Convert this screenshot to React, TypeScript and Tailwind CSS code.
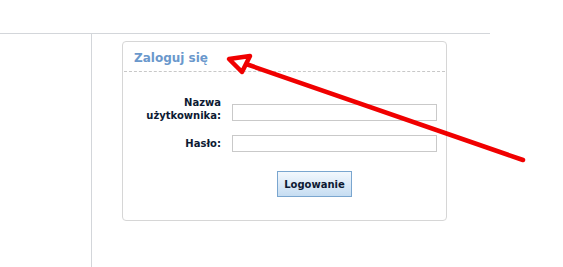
import React from 'react';

export default function App() {
  return (
    <div className="relative w-[563px] h-[267px] bg-white overflow-hidden" style={{ fontFamily: '"DejaVu Sans", Verdana, sans-serif' }}>
      <div className="h-[33px]" />
      <div className="flex w-[490px] h-[234px] border-t border-[#d3d6da]">
        <div className="w-[92px] border-r border-[#d3d6da]" />
        <div className="pl-[30px] pt-[7px]">
          <div className="w-[325px] h-[180px] border border-[#d6d6d6] rounded-[4px] bg-white">
            <div className="mx-[1px] h-[30px] border-b border-dashed border-[#c8c8c8] flex items-center pl-[10px] pt-[2px]">
              <h2 className="text-[12px] font-bold text-[#6a98cc]">Zaloguj się</h2>
            </div>
            <div className="pt-[24px] text-[10px] font-bold text-[#0d1a33]">
              <div className="flex items-start">
                <label className="w-[98px] text-right leading-[13px]">
                  Nazwa
                  <br />
                  użytkownika:
                </label>
                <input className="ml-[11px] mt-[8px] w-[205px] h-[17px] border border-[#c9c9c9] bg-white outline-none" />
              </div>
              <div className="flex items-center mt-[13px]">
                <label className="w-[98px] text-right leading-[13px]">Hasło:</label>
                <input type="password" className="ml-[11px] w-[205px] h-[17px] border border-[#c9c9c9] bg-white outline-none" />
              </div>
              <button className="ml-[154px] mt-[19px] w-[75px] h-[26px] border border-[#7aa6cf] bg-gradient-to-b from-[#f3f8fd] to-[#c6ddf2] text-[10px] font-bold text-[#0d1a33]">
                Logowanie
              </button>
            </div>
          </div>
        </div>
      </div>
      <svg className="absolute inset-0 pointer-events-none" width="563" height="267" viewBox="0 0 563 267">
        <line x1="246" y1="64" x2="523" y2="160" stroke="#f00000" strokeWidth="4.5" strokeLinecap="round" />
        <polygon points="229,59 250,56 242,72" fill="white" stroke="#f00000" strokeWidth="4.5" strokeLinejoin="round" />
      </svg>
    </div>
  );
}
